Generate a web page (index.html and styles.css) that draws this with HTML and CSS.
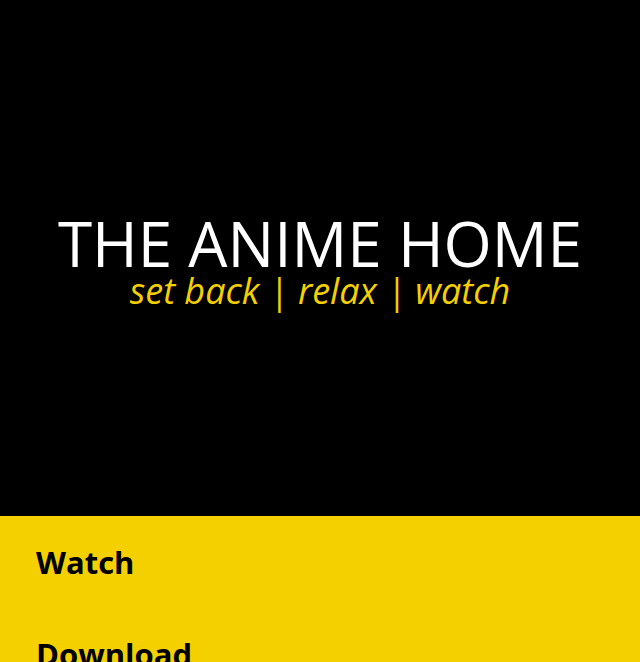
FILE: index.html
```html
<!DOCTYPE html>
<html>
<head>
<meta charset="utf-8">
<link rel="stylesheet" href="styles.css">
</head>
<body>
<header class="hero">
  <h1 class="title">THE ANIME HOME</h1>
  <p class="tagline">set back | relax | watch</p>
</header>
<nav class="menu">
  <a class="menu-item" href="#">Watch</a>
  <a class="menu-item" href="#">Download</a>
</nav>
</body>
</html>
```
FILE: styles.css
```css
html, body { margin: 0; padding: 0; }
body { font-family: "Open Sans", sans-serif; background: #f5d000; }
.hero {
  background: #000;
  height: 516px;
  display: flex;
  flex-direction: column;
  align-items: center;
  justify-content: center;
  padding-top: 10px;
  box-sizing: border-box;
}
.title {
  margin: 0;
  color: #fff;
  font-weight: 400;
  font-size: 62px;
  line-height: 56px;
}
.tagline {
  margin: 0;
  color: #f5d000;
  font-style: italic;
  font-size: 36px;
  line-height: 40px;
}
.menu {
  display: flex;
  flex-direction: column;
  padding: 24px 36px;
  gap: 48px;
}
.menu-item {
  color: #000;
  text-decoration: none;
  font-weight: 700;
  font-size: 31px;
  line-height: 44px;
}
```
